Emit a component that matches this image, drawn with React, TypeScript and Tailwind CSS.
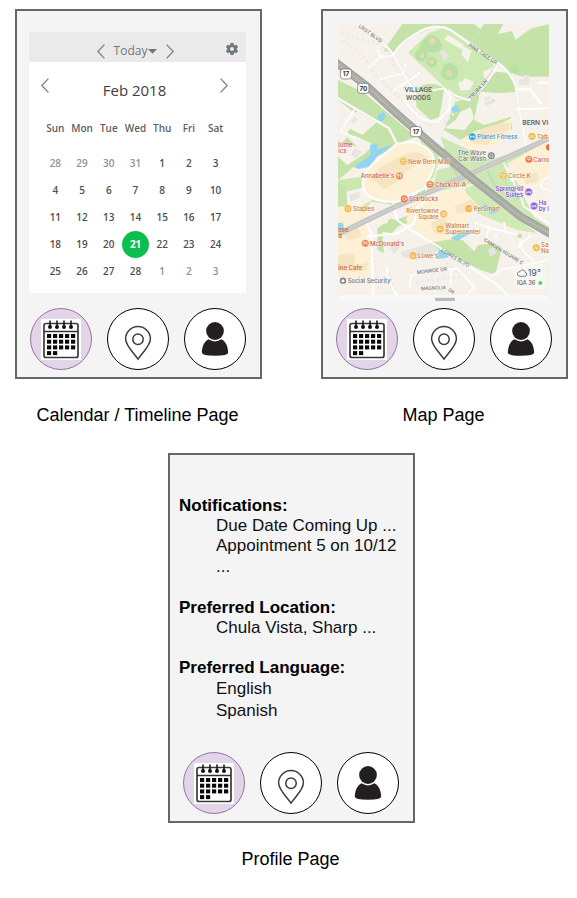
import type { ReactNode } from "react";

const SANS = "font-['Liberation_Sans',Arial,sans-serif]";

function CalendarIcon() {
  return (
    <svg viewBox="0 0 40 41" className="h-[41px] w-10" aria-hidden="true">
      <rect width="40" height="41" fill="#fff" />
      <rect x="3" y="4.5" width="34" height="34" rx="2" fill="none" stroke="#3a3a3a" strokeWidth="1.7" />
      <path d="M3 12.5H37" stroke="#333" strokeWidth="1.5" />
      {[9, 16, 23, 30].map((x) => (
        <g key={x}>
          <path d={`M${x} 1.5V8`} stroke="#111" strokeWidth="1.5" />
          <circle cx={x} cy="8" r="2" fill="#111" />
        </g>
      ))}
      {[0, 1, 2, 3].map((row) =>
        [0, 1, 2, 3, 4]
          .filter((col) => row < 3 || col < 2)
          .map((col) => (
            <rect key={`${row}-${col}`} x={6 + col * 6} y={15 + row * 5.7} width="4.2" height="4" fill="#080808" />
          )),
      )}
    </svg>
  );
}

function PinIcon() {
  return (
    <svg viewBox="0 0 30 38" className="h-9 w-7" aria-hidden="true" fill="none" stroke="#3c3c3c" strokeWidth="1.6">
      <path d="M15 36.3C10 29 1.7 22 1.7 14.5A13.3 13.1 0 0 1 28.3 14.5C28.3 22 20 29 15 36.3Z" />
      <circle cx="15" cy="15" r="5.6" />
    </svg>
  );
}

function PersonIcon() {
  return (
    <svg viewBox="0 0 28 36" className="h-9 w-7" aria-hidden="true" fill="#231f20">
      <circle cx="14" cy="10" r="8.9" />
      <path d="M7.500 18.300Q14 22.500 20.500 18.300C25 20.500 27 26 27.200 31.500Q27 34.700 14 34.800Q1 34.700.8 31.500C1 26 3 20.500 7.500 18.300Z" />
    </svg>
  );
}

function NavBar() {
  const round = "flex size-[62px] items-center justify-center rounded-full border";
  return (
    <nav className="mt-auto flex justify-between pr-[14px] pb-[7px] pl-[13px]">
      <button type="button" aria-label="Calendar" className={`${round} border-[#9673a6] bg-[#e1d5e7]`}>
        <CalendarIcon />
      </button>
      <button type="button" aria-label="Map" className={`${round} border-black bg-white pt-2`}>
        <PinIcon />
      </button>
      <button type="button" aria-label="Profile" className={`${round} border-black bg-white`}>
        <PersonIcon />
      </button>
    </nav>
  );
}

function Screen({ caption, className = "", children }: { caption: string; className?: string; children: ReactNode }) {
  return (
    <figure className={`w-full max-w-[320px] ${className}`}>
      <div className="flex min-h-[370px] flex-col border-2 border-[#666] bg-[#f4f4f4]">
        {children}
        <NavBar />
      </div>
      <figcaption className="mt-[22px] mb-6 pr-[2px] text-center text-[18px] leading-7">{caption}</figcaption>
    </figure>
  );
}

function Chevron({ flip = false }: { flip?: boolean }) {
  return (
    <svg viewBox="0 0 8 15" className="h-[15px] w-2" fill="none" stroke="#7b7e82" strokeWidth="1.3" aria-hidden="true">
      <path d={flip ? "M.6.6 7.2 7.5.6 14.4" : "M7.4.6.8 7.5l6.6 6.9"} />
    </svg>
  );
}

const DAYS = ["Sun", "Mon", "Tue", "Wed", "Thu", "Fri", "Sat"];
const WEEKS = [
  [28, 29, 30, 31, 1, 2, 3],
  [4, 5, 6, 7, 8, 9, 10],
  [11, 12, 13, 14, 15, 16, 17],
  [18, 19, 20, 21, 22, 23, 24],
  [25, 26, 27, 28, 1, 2, 3],
];

function dayColor(week: number, day: number) {
  if ((week === 0 && day > 7) || (week === 4 && day < 7)) return "text-[#929292]";
  return "text-[#4f4f4f]";
}

function CalendarPanel() {
  return (
    <section className="mt-[21px] mr-[14px] ml-3 bg-white font-['Open_Sans','Noto_Sans',sans-serif]">
      <div className="grid grid-cols-[1fr_auto_1fr] items-center bg-[#eaeaea] pt-2 pr-2 pl-1">
        <span />
        <div className="flex items-center gap-[9px]">
          <button type="button" aria-label="Previous">
            <Chevron />
          </button>
          <button type="button" className="flex items-center gap-px text-[12px] leading-[22px] text-[#777]">
            Today
            <svg viewBox="0 0 9 5" className="h-[5px] w-[9px]" fill="#6d777e" aria-hidden="true">
              <path d="M0 0H9L4.500 4.800Z" />
            </svg>
          </button>
          <button type="button" aria-label="Next">
            <Chevron flip />
          </button>
        </div>
        <button type="button" aria-label="Settings" className="mb-1 justify-self-end">
          <svg viewBox="0 0 24 24" className="size-3" fill="#6d777e" aria-hidden="true">
            <path
              fillRule="evenodd"
              d="M9 0h6l.7 3.700 2 1.100 3.400-1.200 3 5.100-2.700 2.300v2l2.700 2.300-3 5.100-3.400-1.200-2 1.100L15 24H9l-.7-3.700-2-1.100-3.400 1.200-3-5.100 2.700-2.300v-2L-.1 8.700l3-5.100 3.400 1.200 2-1.100ZM12 8a4 4 0 1 0 0 8a4 4 0 0 0 0-8Z"
            />
          </svg>
        </button>
      </div>
      <div className="flex items-start justify-between pt-4 pr-[18px] pl-3">
        <button type="button" aria-label="Previous month">
          <Chevron />
        </button>
        <h2 className="text-[15px] leading-6 font-medium text-[#404040]">Feb 2018</h2>
        <button type="button" aria-label="Next month">
          <Chevron flip />
        </button>
      </div>
      <div className="pt-3 pr-[17px] pb-2 pl-[13px]">
        <table className="w-full table-fixed text-center text-[10px]">
          <thead>
            <tr className="h-9 text-[#606060]">
              {DAYS.map((d) => (
                <th key={d} scope="col" className="pb-2 font-semibold">
                  {d}
                </th>
              ))}
            </tr>
          </thead>
          <tbody className="font-semibold">
            {WEEKS.map((week, w) => (
              <tr key={w} className="h-[27px]">
                {week.map((day) => (
                  <td key={day} className={dayColor(w, day)}>
                    {day === 21 ? (
                      <span className="mx-auto flex size-[27px] items-center justify-center rounded-full bg-[#0bbf4e] font-bold text-white">
                        21
                      </span>
                    ) : (
                      day
                    )}
                  </td>
                ))}
              </tr>
            ))}
          </tbody>
        </table>
      </div>
    </section>
  );
}

type Poi = { x: number; y: number; lines: string[]; tx: number; end?: boolean; color: string; dot: string; shape?: string };

const ORANGE = "#c9773b";
const RED = "#cf6038";

const POIS: Poi[] = [
  { x: 415, y: 350, lines: ["Planet Fitness"], tx: 430, color: "#2b93cf", dot: "#2ba8e0", shape: "M-6 0H6M-5-4V4M5-4V4" },
  { x: 472, y: 407, lines: ["The Wave", "Car Wash"], tx: 456, end: true, color: "#74777f", dot: "#7d8089", shape: "M-5 4V-1L-3-5H3L5-1V4Z" },
  { x: 208, y: 424, lines: ["New Bern Mall"], tx: 223, color: ORANGE, dot: "#f2ae35", shape: "M-5-3H5V5H-5ZM-2-3V-6H2V-3" },
  { x: 196, y: 468, lines: ["Annabelle's"], tx: 181, end: true, color: RED, dot: "#ee873c", shape: "M-4-6V6M-6-6V-2H-2V-6M4 6V-6Q1-3 2 1H4" },
  { x: 288, y: 493, lines: ["Chick-fil-A"], tx: 303, color: RED, dot: "#ee7838", shape: "M-6-2H6M-6 3H6M-4-5H4" },
  { x: 211, y: 537, lines: ["Starbucks"], tx: 225, color: RED, dot: "#e86f3a", shape: "M-5-4H3V4H-4ZM3-2H6V2H3" },
  { x: 42, y: 566, lines: ["Staples"], tx: 57, color: ORANGE, dot: "#f2ae35", shape: "M-5-3H5V4H-5Z" },
  { x: 329, y: 582, lines: ["Rivertowne", "Square"], tx: 314, end: true, color: ORANGE, dot: "#f2b13c", shape: "M-5-2H5V5H-5ZM-3-2L0-6L3-2" },
  { x: 404, y: 566, lines: ["PetSmart"], tx: 419, color: ORANGE, dot: "#f2a635", shape: "M-6-2H3L6-5V1L3 2V6M-4 0V6" },
  { x: 318, y: 627, lines: ["Walmart", "Supercenter"], tx: 334, color: ORANGE, dot: "#f2ae35", shape: "M-6-3H5L4 3H-4Z" },
  { x: 94, y: 670, lines: ["McDonald's"], tx: 108, color: RED, dot: "#e9813d", shape: "M-5 5V-4H-1V4M1-4H5V5" },
  { x: 237, y: 707, lines: ["Lowe's"], tx: 252, color: ORANGE, dot: "#f2ae35", shape: "M-5-3H5V4H-5Z" },
  { x: 508, y: 467, lines: ["Circle K"], tx: 523, color: ORANGE, dot: "#f0b53a", shape: "M-5-4H5V1H-5ZM-4 5H4" },
  { x: 584, y: 516, lines: ["SpringHill", "Suites"], tx: 568, end: true, color: "#7e3fd2", dot: "#8d5bd8", shape: "M-6-4V5M-6 2H6V5M-3-1H6V2" },
  { x: 600, y: 558, lines: ["Ha", "by I"], tx: 614, color: "#7e3fd2", dot: "#8d5bd8", shape: "M-6-4V5M-6 2H6V5M-3-1H6V2" },
  { x: 594, y: 349, lines: ["Tatt"], tx: 609, color: ORANGE, dot: "#f0b53a", shape: "M-5 5L-2-5L1 5M4-5V5" },
  { x: 585, y: 418, lines: ["Carro"], tx: 598, color: RED, dot: "#e9703c", shape: "M-5-5H5V0H-5ZM0 0V6" },
  { x: 607, y: 683, lines: ["Sa", "Na"], tx: 621, color: ORANGE, dot: "#f0b53a", shape: "M-5 5L-2-5L1 5M4-5V5" },
];

function PoiMark({ poi }: { poi: Poi }) {
  const first = poi.lines.length > 1 ? poi.y - 2 : poi.y + 7;
  return (
    <g>
      <circle cx={poi.x} cy={poi.y} r="11" fill={poi.dot} stroke="#fff" strokeOpacity=".7" strokeWidth="1.500" />
      <path d={poi.shape} transform={`translate(${poi.x} ${poi.y})`} fill="none" stroke="#fff" strokeWidth="2" />
      <g fill={poi.color} stroke="#fff" strokeOpacity=".6" strokeWidth="3" paintOrder="stroke" textAnchor={poi.end ? "end" : "start"}>
        {poi.lines.map((line, i) => (
          <text key={line} x={poi.tx} y={first + i * 18}>
            {line}
          </text>
        ))}
      </g>
    </g>
  );
}

function Shield({ x, y, n }: { x: number; y: number; n: string }) {
  return (
    <g>
      <rect x={x - 17} y={y - 15} width="34" height="30" rx="9" fill="#fff" stroke="#666" strokeWidth="2" />
      <text x={x} y={y + 7} textAnchor="middle" fontSize="19" fontWeight="700" fill="#333">
        {n}
      </text>
    </g>
  );
}

function MapPanel() {
  return (
    <section className="mt-[13px] mr-[17px] mb-1 ml-[15px]">
      <svg viewBox="12 12 633 831" className="block w-full" role="img" aria-label="Map of Village Woods" fontFamily="Inter, 'Noto Sans', sans-serif" fontSize="18" fontWeight="500">
        <rect x="12" y="12" width="633" height="813" fill="#f6f2eb" />

        {/* parks and woods */}
        <g fill="#c5e3a9">
          <path d="M148 92L205 12H420L440 28L408 68L378 52L335 24H298L245 44L205 68L184 100Z" />
          <path d="M408 70L450 12H508L492 42L534 33L544 59L590 26L645 12V170H565L520 155L485 128Z" />
          <path d="M12 180L90 218L245 350L190 372L170 390L90 430L60 440L12 480V380L40 352L90 400L122 375L70 350L38 345L70 285L12 240Z" />
          <path d="M248 262L242 212Q282 175 330 205L324 250L315 292L290 300Z" />
          <path d="M364 245L405 235L470 168L488 155L532 160L545 215L500 220L440 215L430 250L420 300L450 315L530 290L535 330L480 320L420 335L380 360L330 330Z" />
          <path d="M245 325L320 390L300 470L280 490L290 525L245 545L180 555L110 545L90 580L12 620V480L85 470L100 530L150 548L230 540L280 490L300 430L270 390Z" fill="#cbe8ae" />
          <path d="M320 350L470 420L600 375L645 350V380L520 430L560 510L600 580L645 590V650L560 590L420 490L290 520L310 450L350 440Z" fill="#cde8b4" />
          <path d="M315 540L440 485L490 515L520 570L610 640L550 630L430 580L390 505Z" fill="#d0eab6" />
          <path d="M284 672L340 650L385 660L420 694L432 676L470 670L502 690L483 764L440 750L395 728L330 700Z" />
          <path d="M130 625L170 595L185 600L240 580L245 600L190 620L175 640L145 635L150 700L130 690Z" />
          <path d="M12 490L35 500L40 575L90 570L75 590L30 620L12 620Z" />
        </g>
        <path d="M222 98L285 38L325 25L345 28L480 120L475 165L400 240L370 238Z" fill="#cdeab5" />
        <g fill="#b9e0a4">
          <path d="M255 85Q270 45 300 45Q325 60 325 85Q300 110 255 85Z" />
          <circle cx="262" cy="105" r="19" />
          <circle cx="293" cy="125" r="16" />
          <path d="M320 165Q322 130 350 128Q380 140 370 170Q345 195 320 165Z" />
          <circle cx="543" cy="146" r="13" />
        </g>
        <g fill="#ebd8b2">
          <circle cx="295" cy="63" r="10" />
          <circle cx="265" cy="107" r="6" />
          <circle cx="293" cy="126" r="7" />
          <circle cx="346" cy="160" r="9" />
        </g>
        <g fill="#f7f3eb">
          <path d="M330 58L343 45L390 75L382 88Z" />
          <path d="M386 78L412 92L402 125L383 105ZM390 175L418 185L408 210L384 200ZM447 155L475 142L482 155L456 190ZM372 190L400 176L420 190L404 210L380 212Z" />
          <path d="M434 222L505 218L514 265L440 275ZM380 275L410 262L420 295L392 330L330 325L365 300Z" />
          <path d="M42 290L70 272L130 305L85 345L45 325ZM12 365L70 380L100 395L40 435L12 410Z" />
          <path d="M38 515L95 500L115 540L70 565L40 560ZM100 595L165 580L160 610L110 620Z" />
          <path d="M520 440L560 440L555 480L530 485ZM565 520L600 590L645 620V490L580 475Z" />
        </g>

        {/* commercial blocks */}
        <g fill="#fdf0d4">
          <path d="M85 500Q80 470 105 435L180 378Q230 355 275 380Q315 410 290 460L265 505L200 535Q105 550 85 500Z" />
          <path d="M378 370L420 335L500 310L532 295L530 350L470 380L410 395Z" />
          <path d="M245 545L380 505L438 560L400 590L395 650L290 668L215 600Z" />
          <path d="M12 625L95 600L112 700L105 770L12 765Z" />
          <path d="M530 425L645 360V480L560 505Z" />
          <path d="M12 620V560L80 555L110 590L60 615Z" />
        </g>
        <g fill="#f6e4c3">
          <path d="M108 480L140 440L195 412L230 398L260 400L282 415L250 432L215 455L185 490L150 508L130 488Z" />
          <path d="M400 355L450 325L505 308L530 310L525 330L480 345L460 375L425 372Z" />
          <path d="M362 560L410 538L430 555L400 575L370 580ZM290 610L325 590L350 615L345 645L300 640Z" />
          <path d="M12 705L60 700L65 740L100 725V750L60 755L12 752ZM28 640L70 620L85 650L40 660Z" />
          <path d="M570 470L610 455L612 485L575 492Z" />
        </g>

        {/* buildings */}
        <g fill="#e7e5e2">
          <path d="M318 95L330 88L345 110L328 122ZM450 250L480 235L485 245L455 260ZM450 235L470 228V235L452 243ZM165 680L195 655L200 680L180 700ZM200 695L290 670L315 690L250 720L205 710ZM50 300L65 290L72 300L58 312ZM60 385L85 395L65 415L50 405ZM555 195V178H570V165H585V195Z" />
          <path d="M45 525L75 515L80 530L50 545ZM460 690L480 680L488 700L470 710Z" />
        </g>
        <path d="M22 40L130 70L165 100L185 150L235 175M25 60L90 110L120 160L200 235L300 325M370 270L330 310M120 720L135 810M230 790L380 770M165 760L190 820M300 700L380 760" fill="none" stroke="#ece9e4" strokeWidth="8" strokeDasharray="7 9" />

        {/* water */}
        <g fill="#91d5f1">
          <path d="M133 283L150 277L155 293L142 305L130 296Z" />
          <path d="M60 440L110 405L108 374L128 370L130 388L180 374L130 408L108 440L72 447Z" />
          <ellipse cx="364" cy="268" rx="12" ry="9" />
          <path d="M314 690L330 692L344 712L308 718ZM350 655L390 630L418 635L370 662ZM445 550L480 565L495 575L470 582Z" />
          <path d="M12 608L28 610V628H12ZM530 505L560 525L550 540Z" />
        </g>

        {/* local streets */}
        <g fill="none" stroke="#e5e2da" strokeWidth="8" strokeLinecap="round" strokeLinejoin="round">
          <path d="M70 12L130 50L180 104L208 160L245 222L300 210M180 104Q190 75 240 45Q300 5 350 30L480 122Q530 150 548 205L555 270L580 390" />
          <path d="M12 235L165 325L188 370M488 138L405 240Q360 230 345 212" />
        </g>
        <g fill="none" stroke="#fff" strokeWidth="6" strokeLinecap="round" strokeLinejoin="round">
          <path d="M70 12L130 50L180 104L208 160L245 222M180 104Q190 75 240 45Q300 5 350 30L480 122Q530 150 548 205L555 270L580 390" />
          <path d="M180 107L140 110L104 142M131 93L140 110M208 160L140 177M208 150L214 136M182 210L255 160" strokeWidth="4" />
          <path d="M12 235L165 325L188 370M60 270L20 335L66 353M488 138Q460 200 405 240Q360 230 345 212M300 210L330 205L350 230L345 270L310 305Q270 310 235 270L208 240" strokeWidth="5" />
          <path d="M188 372L235 365Q320 390 295 455L270 505L190 545Q90 550 86 490Q90 450 130 420Z" />
          <path d="M178 550L190 600L215 620L330 690L490 795L520 825M275 500L285 540L250 560L240 610L190 640L100 650M98 610L112 640L118 825M160 745V780L190 825M550 268L645 265M545 208H590L620 250M615 188H645" />
          <path d="M228 800L232 765L370 745L420 800M350 755V790M400 825L420 800M470 770L500 750L645 720M510 430L560 530L570 560L645 610" strokeWidth="5" />
          <path d="M428 610L470 625L515 635L555 645L565 690L600 725M510 612L515 635M465 620L458 650M555 675L580 655" strokeWidth="5" />
          <path d="M645 470Q610 485 625 505L645 510" strokeWidth="4" />
        </g>
        <g fill="#fff" stroke="#e2dfd9">
          {[[131, 93], [104, 142], [140, 177], [214, 136], [182, 210], [255, 160], [428, 610], [510, 612], [486, 646], [458, 650], [585, 650], [557, 680]].map(([x, y]) => (
            <circle key={`${x}-${y}`} cx={x} cy={y} r="6" />
          ))}
        </g>
        <circle cx="557" cy="648" r="7" fill="#bfe0ab" />

        {/* highways */}
        <g fill="none">
          <path d="M12 643L100 600L180 562L290 515L480 430L645 355" stroke="#c6c6c6" strokeWidth="16" />
          <path d="M12 643L100 600L180 562L290 515L480 430L645 355" stroke="#dcdcdc" strokeWidth="2" />
          <path d="M320 400L375 470M460 455L490 510M380 440L330 385" stroke="#c7d5ba" strokeWidth="5" />
          <path d="M-10 115L100 200L185 278L300 378L420 480L560 590L670 654" stroke="#9c9c9c" strokeWidth="24" />
          <path d="M-10 115L100 200L185 278L300 378L420 480L560 590L670 654" stroke="#acacac" strokeWidth="19" />
          <path d="M-10 115L100 200L185 278L300 378L420 480L560 590L670 654" stroke="#bccb93" strokeWidth="3" />
        </g>

        {/* street and area names */}
        <g fill="#787878" fontSize="15">
          <text transform="translate(72 21) rotate(35)">URST BLVD</text>
          <text transform="translate(402 78) rotate(34)">PINE TREE DR</text>
          <text transform="translate(411 240) rotate(-48)">TRUBA LN</text>
          <text transform="translate(320 693) rotate(31)">LOWES BLVD</text>
          <text transform="translate(448 662) rotate(32)" fontSize="14">CAMDEN SQUARE C</text>
          <text transform="translate(249 763) rotate(-7)">MONROE DR</text>
          <text transform="translate(261 811) rotate(-3)" fontSize="14">MAGNOLIA</text>
          <text transform="translate(341 812) rotate(35)" fontSize="14">DR</text>
        </g>
        <g fill="#626262" fontFamily="Roboto, sans-serif" fontSize="21" fontWeight="500">
          <text x="253" y="216" textAnchor="middle">VILLAGE</text>
          <text x="253" y="241" textAnchor="middle">WOODS</text>
          <text x="565" y="314">BERN VI</text>
        </g>
        <Shield x={36} y={162} n="17" />
        <Shield x={88} y={205} n="70" />
        <Shield x={246} y={335} n="17" />

        {POIS.map((poi) => (
          <PoiMark key={`${poi.x}-${poi.y}`} poi={poi} />
        ))}
        <circle cx="646" cy="382" r="10" fill="#e9703c" />
        <circle cx="27" cy="782" r="7" fill="#fff" stroke="#888" strokeWidth="5" />
        <text x="41" y="788" fill="#777">Social Security</text>
        <g fill="#d9536a">
          <text x="13" y="382">lume</text>
          <text x="13" y="400">ics</text>
        </g>
        <g fill={RED}>
          <text x="13" y="637">ese</text>
          <text x="13" y="655">d</text>
          <text x="13" y="749">ine Cafe</text>
        </g>

        {/* weather card */}
        <rect x="540" y="735" width="93" height="72" rx="12" fill="#f8f7f4" />
        <path d="M558 769Q549 768 550 761Q552 754 558 755Q561 747 569 750Q573 753 573 757Q580 758 578 765Q577 769 571 769Z" fill="none" stroke="#666" strokeWidth="2.500" />
        <text x="581" y="769" fontSize="27" fontWeight="400" fill="#555">19°</text>
        <text x="549" y="795" fontSize="17" fill="#666">IQA 36</text>
        <circle cx="619" cy="789" r="6" fill="#55d273" />

        {/* bottom sheet */}
        <path d="M12 843V838Q14 825 28 825H629Q643 825 645 838V843Z" fill="#f7f8f7" />
        <rect x="303" y="833" width="60" height="10" rx="2" fill="#bababa" />
      </svg>
    </section>
  );
}

function ProfilePanel() {
  const title = "leading-5 font-bold text-black";
  return (
    <dl className="flex flex-col gap-5 px-[9px] pt-[41px] text-[17px] text-[#111]">
      <div>
        <dt className={title}>Notifications:</dt>
        <dd className="pl-[37px] leading-5">Due Date Coming Up ...</dd>
        <dd className="pl-[37px] leading-5">Appointment 5 on 10/12</dd>
        <dd className="pl-[37px] leading-[22px]">...</dd>
      </div>
      <div>
        <dt className={title}>Preferred Location:</dt>
        <dd className="pl-[37px] leading-5">Chula Vista, Sharp ...</dd>
      </div>
      <div>
        <dt className={title}>Preferred Language:</dt>
        <dd className="pl-[37px] leading-[22px]">English</dd>
        <dd className="pl-[37px] leading-[22px]">Spanish</dd>
      </div>
    </dl>
  );
}

export default function App() {
  return (
    <main
      className={`grid min-h-screen grid-cols-2 content-start justify-items-center gap-x-[59px] bg-white pt-[9px] pr-[9px] pl-[15px] text-black ${SANS}`}
    >
      <Screen caption="Calendar / Timeline Page">
        <CalendarPanel />
      </Screen>
      <Screen caption="Map Page">
        <MapPanel />
      </Screen>
      <div className="col-span-2 grid w-full grid-cols-[1fr_247px_1fr]">
        <Screen caption="Profile Page" className="col-start-2">
          <ProfilePanel />
        </Screen>
      </div>
    </main>
  );
}
